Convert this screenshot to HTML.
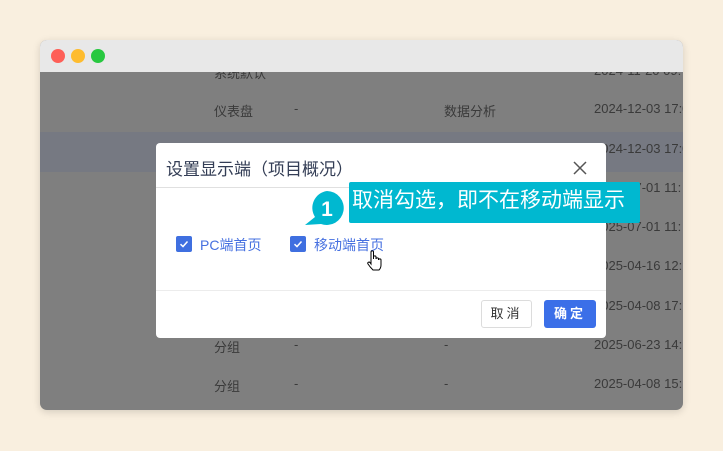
<!DOCTYPE html><html><head><meta charset="utf-8"><style>
*{margin:0;padding:0;box-sizing:border-box}
body{width:723px;height:451px;background:#f9efdf;font-family:"Liberation Sans","Noto Sans CJK SC",sans-serif;position:relative;overflow:hidden}
.win{position:absolute;left:40px;top:40px;width:643px;height:370px;border-radius:7px;overflow:hidden;background:#7f7f7f;box-shadow:0 2px 8px rgba(0,0,0,.15)}
.bar{position:absolute;left:0;top:0;width:100%;height:32px;background:#e8e8e8;z-index:2}
.dot{position:absolute;top:9px;width:14px;height:14px;border-radius:50%}
.t{position:absolute;font-size:13px;color:#3a3a3a;white-space:nowrap}
.hl{position:absolute;left:0;top:92px;width:100%;height:40px;background:#767982}
.modal{position:absolute;left:156px;top:143px;width:450px;height:195px;background:#fff;border-radius:4px}
.cb{position:absolute;top:93px;width:16px;height:16px;background:#3f6fe0;border-radius:2px}
.lbl{position:absolute;top:92px;font-size:14px;color:#4670e0}
.btn{position:absolute;top:157px;height:28px;border-radius:3px;font-size:13px;text-align:center;line-height:26px;letter-spacing:3px}
</style></head><body>
<div class="win">
<div class="hl"></div>
<div class="bar"><div class="dot" style="left:11px;background:#fe5f57"></div><div class="dot" style="left:31px;background:#febc2e"></div><div class="dot" style="left:51px;background:#28c840"></div></div>
<div class="t" style="left:174px;top:23px">系统默认</div><div class="t" style="left:254px;top:23px">-</div><div class="t" style="left:404px;top:23px">-</div><div class="t" style="left:554px;top:23px">2024-11-20 09:</div>
<div class="t" style="left:174px;top:61px">仪表盘</div><div class="t" style="left:254px;top:61px">-</div><div class="t" style="left:404px;top:61px">数据分析</div><div class="t" style="left:554px;top:61px">2024-12-03 17:0</div>
<div class="t" style="left:554px;top:101px">2024-12-03 17:0</div>
<div class="t" style="left:554px;top:140px">2025-07-01 11:</div>
<div class="t" style="left:554px;top:179px">2025-07-01 11:</div>
<div class="t" style="left:554px;top:218px">2025-04-16 12:</div>
<div class="t" style="left:554px;top:258px">2025-04-08 17:</div>
<div class="t" style="left:174px;top:297px">分组</div><div class="t" style="left:254px;top:297px">-</div><div class="t" style="left:404px;top:297px">-</div><div class="t" style="left:554px;top:297px">2025-06-23 14:</div>
<div class="t" style="left:174px;top:336px">分组</div><div class="t" style="left:254px;top:336px">-</div><div class="t" style="left:404px;top:336px">-</div><div class="t" style="left:554px;top:336px">2025-04-08 15:</div>
</div>
<div class="modal">
<div style="position:absolute;left:10px;top:12px;font-size:17px;color:#333d55">设置显示端（项目概况）</div>
<svg style="position:absolute;left:417px;top:18px" width="14" height="14"><path d="M1 1L13 13M13 1L1 13" stroke="#555" stroke-width="1.5"/></svg>
<div style="position:absolute;left:0;top:44px;width:100%;height:1px;background:#e0e0e0"></div>
<div class="cb" style="left:20px"><svg width="16" height="16"><path d="M4.5 8.2L7 10.5L11.5 5.5" stroke="#fff" stroke-width="1.5" fill="none"/></svg></div>
<div class="lbl" style="left:44px">PC端首页</div>
<div class="cb" style="left:134px"><svg width="16" height="16"><path d="M4.5 8.2L7 10.5L11.5 5.5" stroke="#fff" stroke-width="1.5" fill="none"/></svg></div>
<div class="lbl" style="left:158px">移动端首页</div>
<div style="position:absolute;left:0;top:147px;width:100%;height:1px;background:#ececec"></div>
<div class="btn" style="left:325px;width:51px;border:1px solid #dcdcdc;color:#333">取消</div>
<div class="btn" style="left:388px;width:52px;background:#3b6fe8;color:#fff;font-weight:bold;line-height:28px">确定</div>
</div>
<svg style="position:absolute;left:300px;top:188px" width="50" height="40"><path d="M27 3a17 17 0 1 1-6 33L5 37L15 29A17 17 0 0 1 27 3z" fill="#00b8d0"/><text x="27" y="28" font-size="21" font-weight="bold" fill="#fff" text-anchor="middle" font-family="Liberation Sans">1</text></svg>
<div style="position:absolute;left:349px;top:182px;width:291px;height:41px;background:#00b8d0;border-radius:2px;color:#fff;font-size:21px;line-height:38px;padding-left:3px;white-space:nowrap">取消勾选，即不在移动端显示</div>
<svg style="position:absolute;left:366px;top:250px" width="18" height="22"><path d="M5 2c0-1.5 2.5-1.5 2.5 0v7l0-2c0-1.5 2.5-1.5 2.5 0v2c0-1.5 2.5-1.5 2.5 0v1c0-1.5 2.5-1.5 2.5 0v5c0 2-1 4-2 5H7c-1-1-3-3-5-6c-1-1.5 1-2.5 2-1.5L5 14z" fill="#fff" stroke="#000" stroke-width="1"/></svg>
</body></html>
